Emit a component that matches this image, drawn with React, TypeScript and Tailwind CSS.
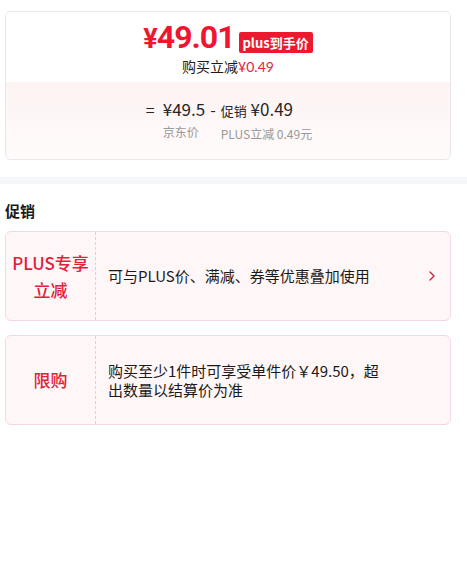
export default function App() {
  return (
    <div className="min-h-screen bg-white pt-[11px]" style={{ fontFamily: '"Noto Sans CJK SC", "Noto Sans", sans-serif' }}>
      {/* price summary */}
      <div className="ml-[5px] w-[446px] rounded-md border border-[#ebe6e8] overflow-hidden">
        <div className="flex flex-col items-center bg-white pt-[7px] h-[70px]">
          <div className="flex items-end">
            <div
              className="text-[32px] leading-[37px] font-bold text-[#f0162f] tracking-[-1px]"
              style={{ fontFamily: 'Roboto, "Noto Sans CJK SC", sans-serif' }}
            >
              <span className="text-[27px]">¥</span>49.01
            </div>
            <div className="ml-[4px] mb-[5px] h-[21px] px-[4px] rounded-[2px] bg-[#ec1a2e] text-white text-[13px] font-bold leading-[21px]">
              plus到手价
            </div>
          </div>
          <div
            className="text-[14px] leading-[17px] text-[#1a1a1a]"
            style={{ fontFamily: 'Lato, "Noto Sans CJK SC", sans-serif' }}
          >
            购买立减<span className="text-[#e8243a]">¥0.49</span>
          </div>
        </div>
        <div className="h-[77px] bg-gradient-to-b from-[#fdf3f3] to-[#fffbfb] flex justify-center pt-[15px]">
          <div className="flex items-start text-[#262626] ml-[2px]">
            <span className="text-[16px] leading-[24px] mr-[8px]">=</span>
            <div className="flex flex-col">
              <span className="text-[17px] leading-[24px]">¥49.5</span>
              <span className="text-[12px] leading-[20px] text-[#999] mt-[1px]">京东价</span>
            </div>
            <span className="text-[16px] leading-[24px] mx-[5px]">-</span>
            <div className="flex flex-col">
              <span className="text-[17px] leading-[24px]">
                <span className="text-[13px]">促销</span> ¥0.49
              </span>
              <span className="text-[12px] leading-[20px] text-[#999] mt-[1px]">PLUS立减 0.49元</span>
            </div>
          </div>
        </div>
      </div>

      <div className="mt-[17px] h-[7px] bg-[#f5f6f9]" />

      <div className="px-[5px]">
        <div className="mt-[16px] text-[15px] leading-[22px] font-bold text-[#1a1a1a]">促销</div>

        <div className="mt-[9px] w-[446px] h-[90px] flex rounded-md border border-[#f4d9de] bg-[#fff6f7]">
          <div className="w-[90px] shrink-0 border-r border-dashed border-[#efc9cf] flex items-center justify-center text-center text-[17px] leading-[27px] font-medium text-[#e1203a]">
            PLUS专享<br />立减
          </div>
          <div className="flex-1 flex items-center pl-[12px] pr-[14px] text-[15px] text-[#1a1a1a]">
            <span className="flex-1">可与PLUS价、满减、券等优惠叠加使用</span>
            <svg width="8" height="12" viewBox="0 0 8 12" fill="none">
              <path d="M2 2l4 4-4 4" stroke="#c8283c" strokeWidth="1.4" strokeLinecap="round" strokeLinejoin="round" />
            </svg>
          </div>
        </div>

        <div className="mt-[14px] w-[446px] h-[90px] flex rounded-md border border-[#f4d9de] bg-[#fff6f7]">
          <div className="w-[90px] shrink-0 border-r border-dashed border-[#efc9cf] flex items-center justify-center text-[17px] font-medium text-[#e1203a]">
            限购
          </div>
          <div className="flex-1 flex items-center pl-[12px] text-[15px] leading-[19px] text-[#1a1a1a]">
            <span className="w-[278px]">购买至少1件时可享受单件价￥49.50，超出数量以结算价为准</span>
          </div>
        </div>
      </div>
    </div>
  );
}
